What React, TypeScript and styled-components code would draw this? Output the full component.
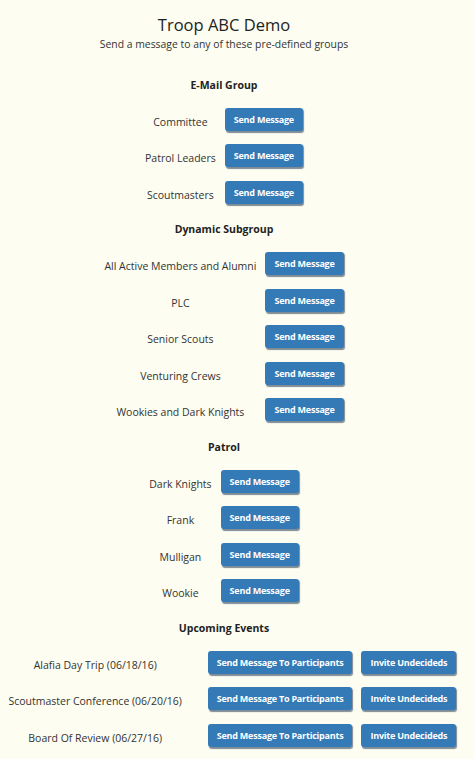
import * as React from 'react';
import styled, { createGlobalStyle } from 'styled-components';

const GlobalStyle = createGlobalStyle`
  html, body {
    margin: 0;
    padding: 0;
    background-color: #fdfdf1;
    overflow: hidden;
  }
  body {
    font-family: 'Open Sans', 'Noto Sans', sans-serif;
    color: #333;
  }
`;

const Page = styled.div`
  width: 448px;
  display: flex;
  flex-direction: column;
  align-items: center;
  padding-top: 14px;
`;

const Title = styled.h1`
  margin: 0;
  font-size: 16.5px;
  font-weight: 400;
  line-height: 22px;
  color: #222;
`;

const SubTitle = styled.p`
  margin: 0 0 16px;
  font-size: 10.4px;
  line-height: 16px;
`;

const GroupTable = styled.table<{ $labelWidth?: number }>`
  border-collapse: collapse;
  flex-shrink: 0;
  width: max-content;
  margin-bottom: 2px;

  th {
    height: 33px;
    padding: 0;
    font-size: 10.5px;
    font-weight: 700;
    text-align: center;
    vertical-align: middle;
    color: #222;
  }

  td {
    padding: 6.75px 4.5px;
    vertical-align: middle;
    white-space: nowrap;
  }

  td:first-child {
    text-align: center;
    font-size: 10.5px;
    padding-top: 9px;
    padding-bottom: 4.5px;
    ${({ $labelWidth }) => ($labelWidth ? `width: ${$labelWidth}px;` : '')}
  }
`;

const ActionButton = styled.button`
  display: block;
  height: 23px;
  padding: 0 9px;
  border: none;
  border-radius: 3px;
  background-color: #337ab7;
  color: #fff;
  font-family: 'Open Sans', 'Noto Sans', sans-serif;
  font-size: 9px;
  font-weight: 700;
  letter-spacing: -0.22px;
  white-space: nowrap;
  box-shadow: 1px 1.5px 1px rgba(20, 45, 75, 0.55);
  cursor: pointer;
`;

interface Group {
  title: string;
  items: string[];
}

const groups: Group[] = [
  {
    title: 'E-Mail Group',
    items: ['Committee', 'Patrol Leaders', 'Scoutmasters'],
  },
  {
    title: 'Dynamic Subgroup',
    items: [
      'All Active Members and Alumni',
      'PLC',
      'Senior Scouts',
      'Venturing Crews',
      'Wookies and Dark Knights',
    ],
  },
  {
    title: 'Patrol',
    items: ['Dark Knights', 'Frank', 'Mulligan', 'Wookie'],
  },
];

const events = [
  'Alafia Day Trip (06/18/16)',
  'Scoutmaster Conference (06/20/16)',
  'Board Of Review (06/27/16)',
];

const GroupSection = ({ title, items }: Group) => (
  <GroupTable>
    <thead>
      <tr>
        <th colSpan={2}>{title}</th>
      </tr>
    </thead>
    <tbody>
      {items.map(item => (
        <tr key={item}>
          <td>{item}</td>
          <td>
            <ActionButton>Send Message</ActionButton>
          </td>
        </tr>
      ))}
    </tbody>
  </GroupTable>
);

export default function App() {
  return (
    <Page>
      <GlobalStyle />
      <Title>Troop ABC Demo</Title>
      <SubTitle>Send a message to any of these pre-defined groups</SubTitle>
      {groups.map(group => (
        <GroupSection key={group.title} {...group} />
      ))}
      <GroupTable $labelWidth={207}>
        <thead>
          <tr>
            <th colSpan={3}>Upcoming Events</th>
          </tr>
        </thead>
        <tbody>
          {events.map(event => (
            <tr key={event}>
              <td>{event}</td>
              <td>
                <ActionButton>Send Message To Participants</ActionButton>
              </td>
              <td>
                <ActionButton>Invite Undecideds</ActionButton>
              </td>
            </tr>
          ))}
        </tbody>
      </GroupTable>
    </Page>
  );
}
